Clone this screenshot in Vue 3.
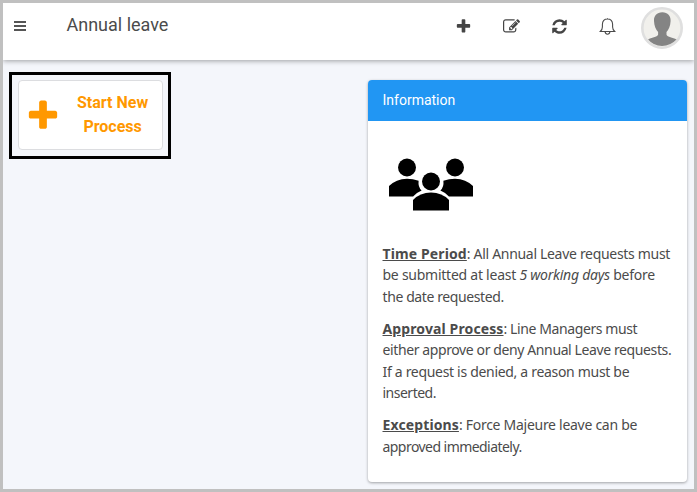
<script setup>
const plus = 'M1600 736v192q0 40-28 68t-68 28h-416v416q0 40-28 68t-68 28h-192q-40 0-68-28t-28-68v-416h-416q-40 0-68-28t-28-68v-192q0-40 28-68t68-28h416v-416q0-40 28-68t68-28h192q40 0 68 28t28 68v416h416q40 0 68 28t28 68z'
const edit = 'M888 1184l116-116-152-152-116 116v56h96v96h56zm440-720q-16-16-33 1l-350 350q-17 17-1 33t33-1l350-350q17-17 1-33zm80 594v190q0 119-84.500 203.500t-203.500 84.500h-832q-119 0-203.500-84.500t-84.500-203.500v-832q0-119 84.500-203.500t203.500-84.500h832q63 0 117 25 15 7 18 23 3 17-9 29l-49 49q-14 14-32 8-23-6-45-6h-832q-66 0-113 47t-47 113v832q0 66 47 113t113 47h832q66 0 113-47t47-113v-126q0-13 9-22l64-64q15-15 35-7t20 29zm-96-738l288 288-672 672h-288v-288zm444 132l-92 92-288-288 92-92q28-28 68-28t68 28l152 152q28 28 28 68t-28 68z'
const refresh = 'M1639 1056q0 5-1 7-64 268-268 434.500t-478 166.500q-146 0-282.500-55t-243.500-157l-129 129q-19 19-45 19t-45-19-19-45v-448q0-26 19-45t45-19h448q26 0 45 19t19 45-19 45l-137 137q71 66 161 102t187 36q134 0 250-65t186-179q11-17 53-117 8-23 30-23h192q13 0 22.500 9.500t9.500 22.500zm25-800v448q0 26-19 45t-45 19h-448q-26 0-45-19t-19-45 19-45l138-138q-148-137-349-137-134 0-250 65t-186 179q-11 17-53 117-8 23-30 23h-199q-13 0-22.500-9.500t-9.500-22.500v-7q65-268 270-434.500t480-166.500q146 0 284 55.500t245 156.500l130-129q19-19 45-19t45 19 19 45z'
const actions = [
  { name: 'New', path: plus },
  { name: 'Edit', path: edit },
  { name: 'Refresh', path: refresh }
]
</script>

<template>
  <div class="window">
    <header class="topbar">
      <svg class="menu" viewBox="0 0 12 10" aria-label="Menu"><path d="M0 1h12M0 5h12M0 9h12" /></svg>
      <h1 class="title">Annual leave</h1>
      <nav class="actions">
        <svg v-for="a in actions" :key="a.name" class="action" viewBox="0 0 1792 1792" :aria-label="a.name"><path :d="a.path" /></svg>
        <svg class="action bell" viewBox="0 0 17 17" aria-label="Notifications">
          <path d="M1.300 13.500Q3.400 11.500 3.400 9V6.200Q3.600 1 8.500 1T13.600 6.200V9q0 2.500 2.100 4.500zM6 13.700q.4 2.500 2.500 2.500T11 13.700M8.500 1V.2" />
        </svg>
      </nav>
      <svg class="avatar" viewBox="0 0 42 42" aria-label="Profile">
        <circle cx="21" cy="21" r="19.7" class="avatar-ring" />
        <path class="avatar-person" d="M21.300 5.300c-5.500 0-8.600 3.500-8.300 8.700.2 5 1.900 8.600 4.100 11v2.800c-.8 2.400-7 2.500-10 4.800Q12.500 39 21 39t14.500-6.400c-3.500-2.300-9.200-2.400-10-4.800V25c2.200-2.400 3.900-6 4.100-11 .3-5.200-2.800-8.700-8.300-8.700z" />
      </svg>
    </header>
    <main class="content">
      <div class="highlight">
        <button class="start">
          <svg class="start-icon" viewBox="0 0 1792 1792"><path :d="plus" /></svg>
          <span class="start-label">Start New<br>Process</span>
        </button>
      </div>
      <section class="card">
        <h2 class="card-head">Information</h2>
        <div class="card-body">
          <svg class="people" viewBox="0 0 84 53">
            <circle cx="18" cy="9.500" r="9" />
            <circle cx="66" cy="9.500" r="9" />
            <circle cx="42" cy="23.500" r="9" />
            <path d="M0 38.500V28Q7 21 18 20.700q6 0 11.600 2-.7 6.300 3 9.800-5 2-8.500 6z" />
            <path d="M84 38.500V28Q77 21 66 20.700q-6 0-11.600 2 .7 6.300-3 9.800 5 2 8.500 6z" />
            <path d="M24 52.500V42Q31 34.500 42 34.500T60 42v10.500z" />
          </svg>
          <p><b>Time Period</b><span class="a1">: All Annual Leave requests must</span><br><span class="a2">be submitted at least <i>5 working days</i> before</span><br><span class="a3">the date requested.</span></p>
          <p><b>Approval Process</b><span class="b1">: Line Managers must</span><br><span class="b2">either approve or deny Annual Leave requests.</span><br><span class="b3">If a request is denied, a reason must be</span><br><span class="b4">inserted.</span></p>
          <p><b>Exceptions</b><span class="c1">: Force Majeure leave can be</span><br><span class="c2">approved immediately.</span></p>
        </div>
      </section>
    </main>
  </div>
</template>

<style>
body { margin: 0; }
</style>

<style scoped>
.window {
  box-sizing: border-box;
  width: 697px;
  height: 492px;
  border: 3px solid #c0c0c0;
  background: #f4f6fb;
  font-family: Roboto, sans-serif;
  color: #4b4b4b;
  display: flex;
  flex-direction: column;
  overflow: hidden;
}
.topbar {
  height: 57px;
  flex: none;
  box-sizing: border-box;
  display: flex;
  align-items: flex-start;
  padding: 0 11px;
  background: #fff;
  box-shadow: 0 1px 5px rgba(0, 0, 0, .36);
}
.menu { width: 12px; height: 10px; margin-top: 18px; fill: none; stroke: #555; stroke-width: 1.8; }
.title { margin: 9px 0 0 40.500px; font-size: 18px; line-height: 25px; font-weight: 400; white-space: nowrap; }
.actions { display: flex; gap: 31px; margin: 15px 25px 0 auto; }
.action { width: 17px; height: 17px; fill: #454545; }
.bell { fill: none; stroke: #4b4b4b; stroke-width: 1.1; }
.avatar { width: 42px; height: 42px; margin-top: 4px; }
.avatar-ring { fill: #f1f0ec; stroke: #dfdfdf; stroke-width: 2.6; }
.avatar-person { fill: #848484; }
.content {
  display: flex;
  justify-content: space-between;
  align-items: flex-start;
  padding: 12px 7px 0 6px;
}
.highlight {
  box-sizing: border-box;
  width: 162px;
  height: 87px;
  border: 3px solid #000;
  padding: 5px 5px 6px 6px;
  display: flex;
}
.start {
  flex: 1;
  display: flex;
  align-items: center;
  gap: 16px;
  padding: 0 0 0 6px;
  border: 1px solid #dcdde0;
  border-radius: 4px;
  background: #fff;
  color: #ff9800;
  font: 700 16px/24px Roboto, sans-serif;
}
.start-icon { width: 36px; height: 36px; fill: #ff9800; margin-top: 1px; }
.start-label { white-space: nowrap; text-align: center; }
.card {
  width: 319px;
  height: 402px;
  margin-top: 8px;
  border-radius: 4px;
  background: #fff;
  box-shadow: 0 1px 3px rgba(0, 0, 0, .35);
}
.card-head {
  margin: 0;
  height: 41px;
  padding-left: 14.500px;
  border-radius: 4px 4px 0 0;
  background: #2196f3;
  color: #fff;
  font-size: 14px;
  line-height: 41px;
  font-weight: 400;
}
.card-body { padding: 36.500px 0 0 14.500px; font: 14px/21.500px "Noto Sans", sans-serif; white-space: nowrap; }
.people { display: block; width: 84px; height: 53px; margin: 0 0 32px 6.500px; fill: #000; }
p { margin: 0 0 10.500px; }
b { text-decoration: underline; letter-spacing: .12px; }
.a1 { letter-spacing: -.31px; }
.a2 { letter-spacing: -.25px; }
.a3 { letter-spacing: -.4px; }
.b1 { letter-spacing: -.4px; }
.b2 { letter-spacing: -.39px; }
.b3 { letter-spacing: -.31px; }
.b4 { letter-spacing: -.5px; }
.c1 { letter-spacing: -.28px; }
.c2 { letter-spacing: -.55px; }
</style>
